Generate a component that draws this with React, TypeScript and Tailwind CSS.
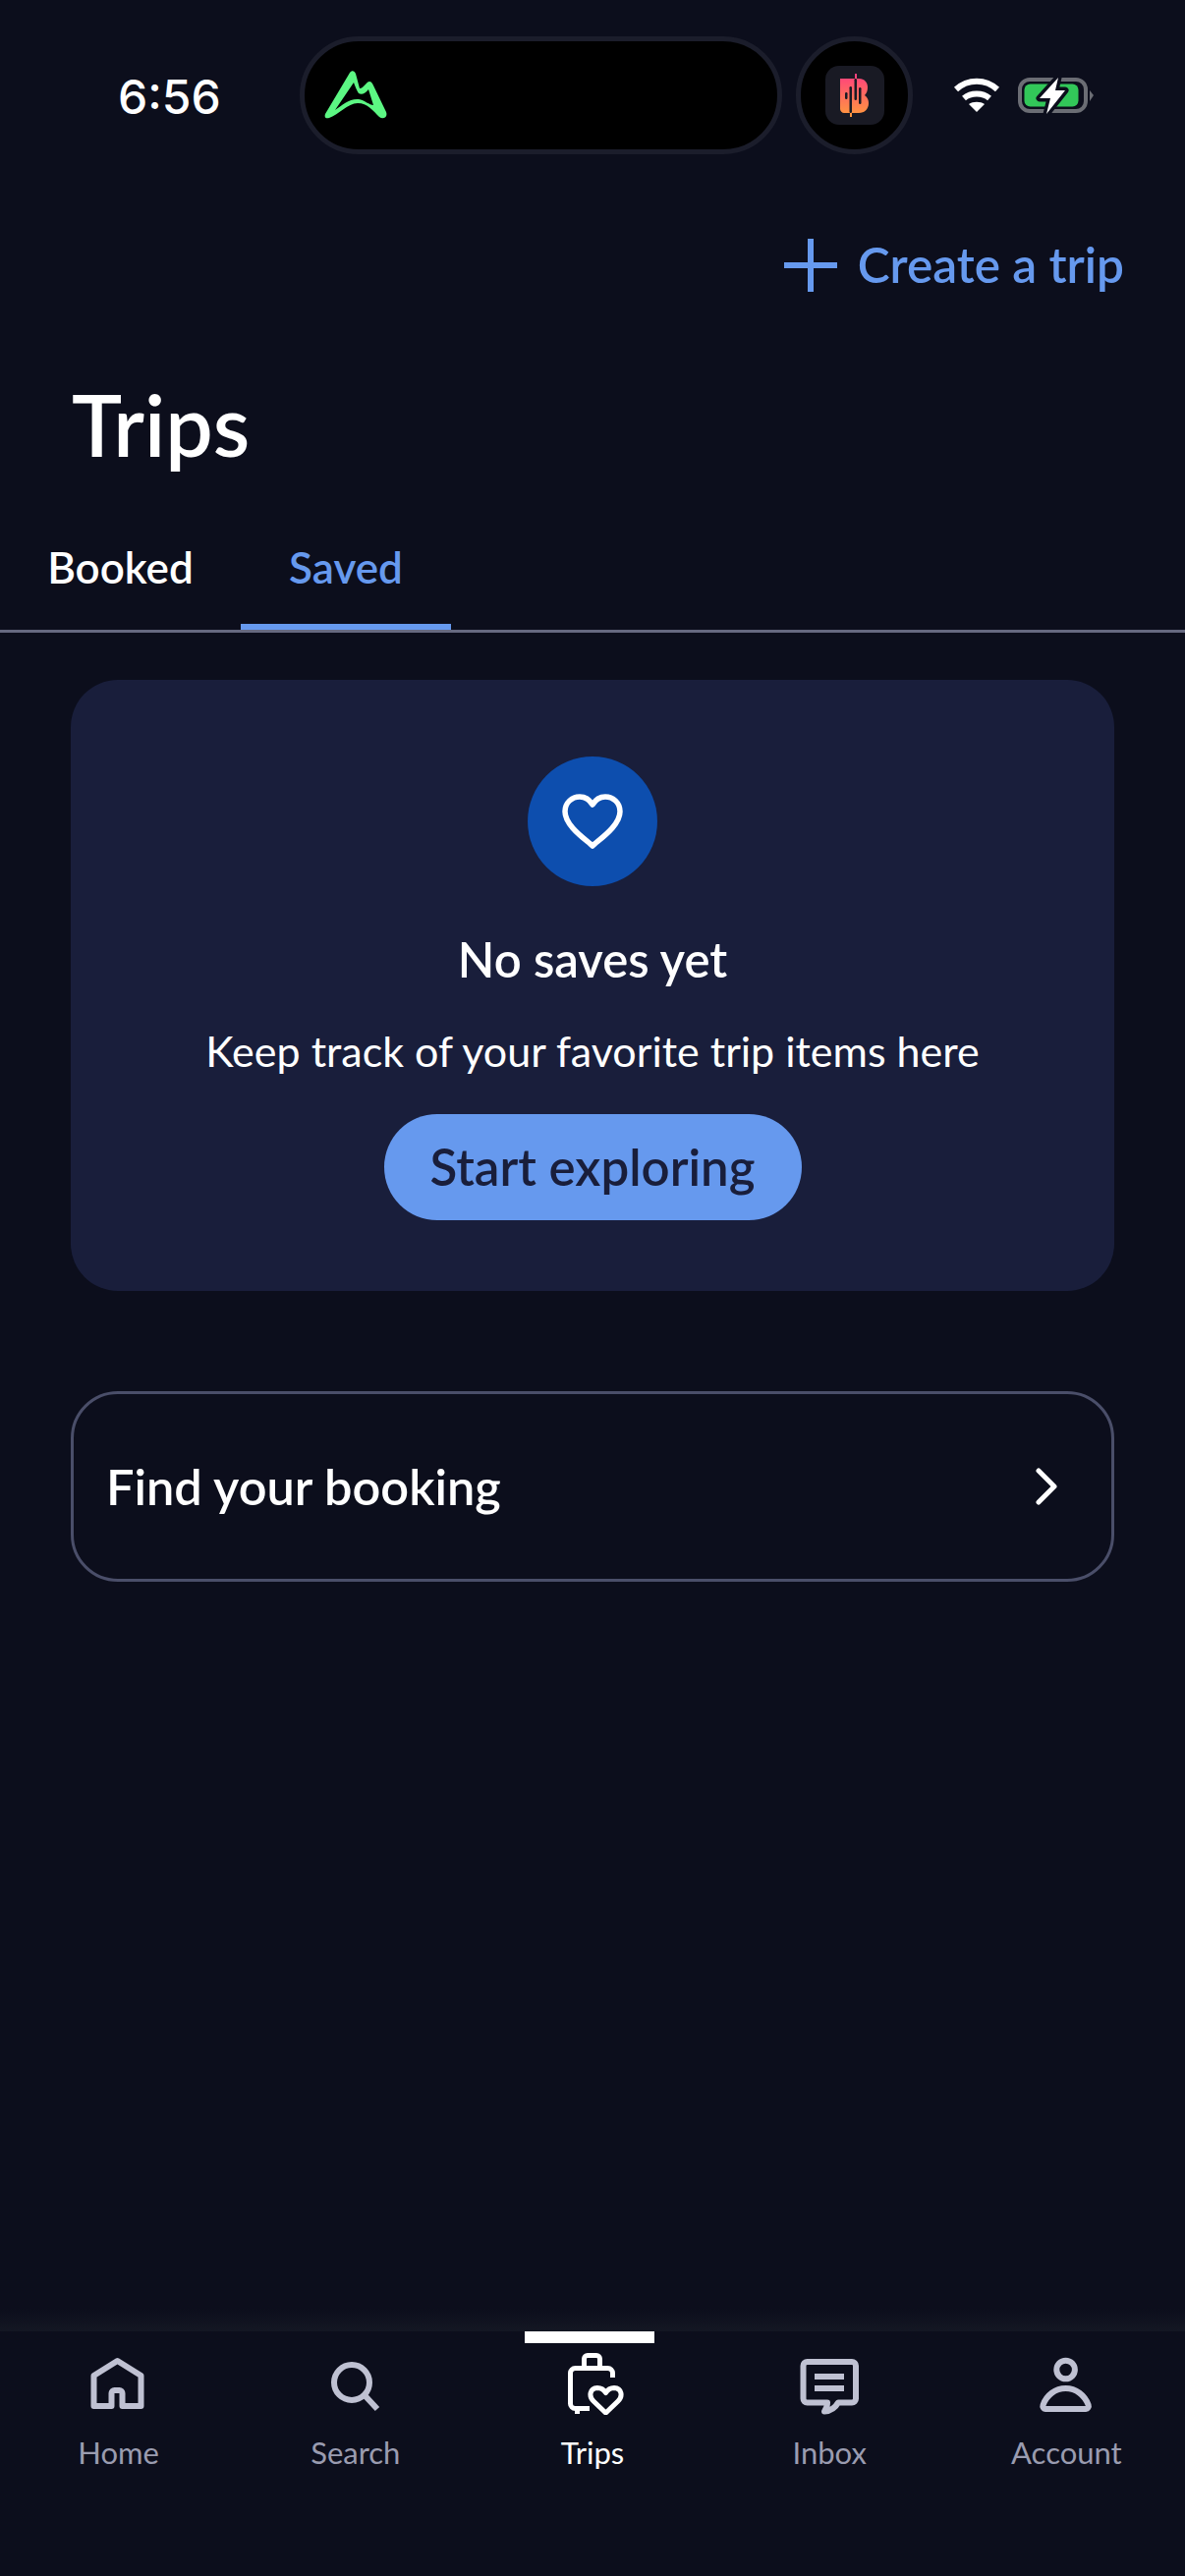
const font = { fontFamily: 'Lato, "Noto Sans", sans-serif' };

const MountainLogo = () => (
  <svg width="64" height="50" viewBox="0 0 64 50">
    <path
      fillRule="evenodd"
      d="M1 44 L26 2 C28 -1 31 0 32 3 L36 18 C40 18 43 11 46 11 C48 11 49 13 50 15 L63 42 C65 47 60 50 56 47 C50 41 44 33 34 33 C24 33 14 45 5 48 C1 49 0 47 1 44 Z M11 40 C18 35 26 28 35 29 C41 30 46 35 50 35 L45 19 C42 23 38 25 35 23 C33 20 31 15 30 12 Z"
      fill="#5cf783"
    />
  </svg>
);

const AppLogo = () => (
  <svg width="29" height="44" viewBox="0 0 29 44">
    <defs>
      <linearGradient id="appGrad" x1="0" y1="0" x2="0" y2="1">
        <stop offset="0" stopColor="#ff3f7f" />
        <stop offset="1" stopColor="#ff9a3c" />
      </linearGradient>
    </defs>
    <path
      d="M0 5 H15 V0 H17 V5 H19 C25 5 28 9 28 14 C28 17 27 20 25 22 C28 24 29 27 29 30 C29 36 25 40 19 40 H12 V44 H10 V40 H4 C2 40 0 38 0 36 Z"
      fill="url(#appGrad)"
    />
    <rect x="9.5" y="13" width="2.5" height="27" rx="1.2" fill="#191a24" />
    <rect x="14.5" y="5" width="2.5" height="22" rx="1.2" fill="#191a24" />
    <rect x="19" y="14" width="2.5" height="17" rx="1.2" fill="#191a24" />
    <rect x="5" y="19" width="2.5" height="7" rx="1.2" fill="#191a24" />
  </svg>
);

const Wifi = () => (
  <svg width="48" height="36" viewBox="0 0 48 36" fill="none" stroke="#fff" strokeWidth="6">
    <path d="M3 12 C15 1 33 1 45 12" />
    <path d="M11 21 C18 15 30 15 37 21" />
    <path d="M16 27 L24 35 L32 27 C28 24 20 24 16 27 Z" fill="#fff" stroke="none" />
  </svg>
);

const Battery = () => (
  <svg width="80" height="40" viewBox="0 0 80 40">
    <rect x="4" y="4" width="67" height="32" rx="10" fill="none" stroke="#6b6d74" strokeWidth="4" />
    <rect x="8.5" y="8.5" width="55" height="23" rx="6" fill="#32c759" />
    <path d="M75 15 L79 20 L75 26 Z" fill="#6b6d74" />
    <path
      d="M43 2 L24 23 H35 L31 39 L50 15 H40 Z"
      fill="#fff"
      stroke="#0c0e1c"
      strokeWidth="7"
      strokeLinejoin="round"
      paintOrder="stroke"
    />
  </svg>
);

const navIcon = { width: 64, height: 64, viewBox: '0 0 64 64', fill: 'none', strokeWidth: 6, strokeLinejoin: 'round' as const, strokeLinecap: 'round' as const };

const HomeIcon = () => (
  <svg {...navIcon} stroke="#bfc1d2">
    <path d="M6.5 24 L30.5 9 L54.5 24 V55 H35.5 V42 A3 3 0 0 0 32.5 39 H27.5 A3 3 0 0 0 24.5 42 V55 H6.5 Z" />
  </svg>
);

const SearchIcon = () => (
  <svg {...navIcon} stroke="#bfc1d2">
    <circle cx="28" cy="31" r="18" />
    <path d="M41 44 L54 58" strokeLinecap="butt" />
  </svg>
);

const TripsIcon = () => (
  <svg {...navIcon} stroke="#fff" strokeWidth={5} strokeLinecap="butt">
    <path d="M23.5 15 V7 A3.5 3.5 0 0 1 27 3.5 H36 A3.5 3.5 0 0 1 39.5 7 V15" />
    <path d="M52.5 26 V21.5 A5 5 0 0 0 47.5 16.5 H14.5 A5 5 0 0 0 9.5 21.5 V52.5 A5 5 0 0 0 14.5 57.5 H29" />
    <path d="M16.5 57.5 V63" />
    <path d="M45.5 62 L33 50 C28 45 29 37 37 36.5 C41 36.5 44 39 45.5 41.5 C47 39 50 36.5 54 36.5 C62 37 63 45 58 50 Z" />
  </svg>
);

const InboxIcon = () => (
  <svg {...navIcon} stroke="#bfc1d2">
    <path d="M5.5 14 A4 4 0 0 1 9.5 10 H55 A4 4 0 0 1 59 14 V47.5 A4 4 0 0 1 55 51.5 H41 C38 57 33 60 27 60.5 C29.5 57 30 54 30 51.5 H9.5 A4 4 0 0 1 5.5 47.5 Z" />
    <path d="M17 25 H47 M17 37 H47" strokeLinecap="butt" />
  </svg>
);

const AccountIcon = () => (
  <svg {...navIcon} stroke="#bfc1d2">
    <circle cx="31.6" cy="18" r="9.3" />
    <path d="M11 58 A3 3 0 0 1 8.5 54 C12 44 21 37 31.6 37 C42 37 51 44 54.7 54 A3 3 0 0 1 52 58 Z" />
  </svg>
);

const navItems = [
  { label: 'Home', icon: <HomeIcon />, active: false },
  { label: 'Search', icon: <SearchIcon />, active: false },
  { label: 'Trips', icon: <TripsIcon />, active: true },
  { label: 'Inbox', icon: <InboxIcon />, active: false },
  { label: 'Account', icon: <AccountIcon />, active: false },
];

export default function App() {
  return (
    <div style={font} className="flex flex-col h-[2622px] w-[1206px] bg-[#0c0e1c] text-white overflow-hidden">
      {/* status bar */}
      <div className="flex items-center h-[120px] mt-[37px] pl-[120px]">
        <span className="w-[185px] text-[48px] font-medium leading-none pt-[4px]" style={{ fontFamily: 'Inter, sans-serif' }}>
          6:56
        </span>
        <div className="flex items-center w-[491px] h-[120px] rounded-[60px] bg-black border-[5px] border-[#1b1d2b] pl-[20px]">
          <MountainLogo />
        </div>
        <div className="flex items-center justify-center w-[119px] h-[120px] ml-[14px] rounded-full bg-black border-[5px] border-[#1b1d2b]">
          <div className="flex items-center justify-center w-[60px] h-[60px] rounded-[14px] bg-[#191a24]">
            <AppLogo />
          </div>
        </div>
        <div className="flex items-center ml-[41px] gap-[16px]">
          <Wifi />
          <Battery />
        </div>
      </div>

      {/* create a trip */}
      <div className="flex justify-end items-center h-[60px] mt-[83px] pr-[62px] text-[#6699ee] gap-[21px]">
        <svg width="54" height="54" viewBox="0 0 54 54" fill="none" stroke="#6699ee" strokeWidth="6">
          <path d="M27 0 V54 M0 27 H54" />
        </svg>
        <span className="text-[49.5px] font-semibold leading-none">Create a trip</span>
      </div>

      {/* title */}
      <h1 className="mt-[82px] pl-[73px] text-[86px] font-semibold leading-[100px]">Trips</h1>

      {/* tabs */}
      <div className="flex h-[132px] mt-[30px] border-b-[3px] border-[#666980]">
        <div className="flex items-center justify-center w-[245px] text-[44px] font-semibold">Booked</div>
        <div className="flex items-center justify-center w-[214px] text-[44px] font-semibold pt-[6px] text-[#6699ee] border-b-[6px] border-[#6699ee]">
          Saved
        </div>
      </div>

      {/* empty state card */}
      <div className="flex flex-col items-center h-[622px] mx-[72px] mt-[48px] pt-[78px] rounded-[48px] bg-[#191e3b]">
        <div className="flex items-center justify-center w-[132px] h-[132px] rounded-full bg-[#0d4eae]">
          <svg width="62" height="56" viewBox="0 0 62 56" fill="none" stroke="#fff" strokeWidth="5.5" strokeLinejoin="round">
            <path d="M31 53 C25 47 3 33 3 18 C3 9 10 3 18 3 C24 3 28 6 31 11 C34 6 38 3 44 3 C52 3 59 9 59 18 C59 33 37 47 31 53 Z" />
          </svg>
        </div>
        <h2 className="mt-[46px] text-[49px] font-semibold leading-[56px]">No saves yet</h2>
        <p className="mt-[40px] text-[43px] leading-[52px]">Keep track of your favorite trip items here</p>
        <button className="mt-[38px] w-[425px] h-[108px] rounded-full bg-[#6699ee] text-[#191e3b] text-[51px] font-semibold">
          Start exploring
        </button>
      </div>

      {/* find your booking */}
      <div className="flex items-center justify-between h-[194px] mx-[72px] mt-[102px] pl-[33px] pr-[53px] rounded-[48px] border-[3px] border-[#4a4e69]">
        <span className="text-[50.5px] font-semibold">Find your booking</span>
        <svg width="26" height="40" viewBox="0 0 26 40" fill="none" stroke="#fff" strokeWidth="5" strokeLinecap="round" strokeLinejoin="round">
          <path d="M5 4 L21 20 L5 36" />
        </svg>
      </div>

      {/* bottom nav */}
      <div className="mt-auto h-[23px] bg-gradient-to-b from-[#0c0e1c] to-[#141723]" />
      <nav className="grid grid-cols-5 h-[249px]">
        {navItems.map((item) => (
          <div key={item.label} className="flex flex-col items-center">
            <div className={item.active ? 'w-[132px] h-[12px] mr-[6px] bg-white' : 'h-[12px]'} />
            <div className="mt-[9px]">{item.icon}</div>
            <span className={`mt-[18px] text-[31px] leading-[40px] ${item.active ? 'text-white' : 'text-[#9a9cb0]'}`}>
              {item.label}
            </span>
          </div>
        ))}
      </nav>
    </div>
  );
}
